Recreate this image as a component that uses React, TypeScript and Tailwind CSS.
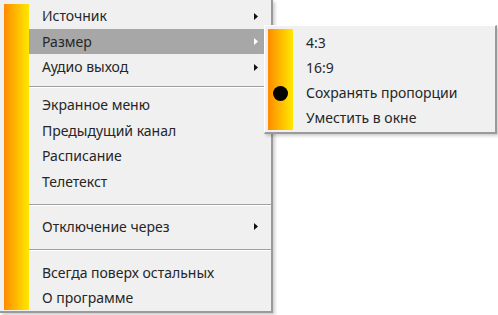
import React from 'react';

type Item =
  | { kind: 'item'; label: string; sub?: boolean; active?: boolean }
  | { kind: 'sep'; h: string };

const mainItems: Item[] = [
  { kind: 'item', label: 'Источник', sub: true },
  { kind: 'item', label: 'Размер', sub: true, active: true },
  { kind: 'item', label: 'Аудио выход', sub: true },
  { kind: 'sep', h: 'h-[12.5px] pt-[6px]' },
  { kind: 'item', label: 'Экранное меню' },
  { kind: 'item', label: 'Предыдущий канал' },
  { kind: 'item', label: 'Расписание' },
  { kind: 'item', label: 'Телетекст' },
  { kind: 'sep', h: 'h-[19.75px] pt-[10px]' },
  { kind: 'item', label: 'Отключение через', sub: true },
  { kind: 'sep', h: 'h-[20.25px] pt-[9.5px]' },
  { kind: 'item', label: 'Всегда поверх остальных' },
  { kind: 'item', label: 'О программе' },
];

const subItems = [
  { label: '4:3' },
  { label: '16:9' },
  { label: 'Сохранять пропорции', checked: true },
  { label: 'Уместить в окне' },
];

const Arrow: React.FC<{ light?: boolean }> = ({ light }) => (
  <svg width="4" height="7" viewBox="0 0 4 7" className="mr-[13px]">
    <path d="M0 0 L4 3.5 L0 7 Z" fill={light ? '#ffffff' : '#111111'} />
  </svg>
);

const App: React.FC = () => {
  return (
    <div
      className="relative w-[498px] h-[315px] bg-white overflow-hidden text-[14px] text-[#262626]"
      style={{ fontFamily: '"Noto Sans", "Open Sans", sans-serif' }}
    >
      {/* main popup menu */}
      <div className="w-[273px] h-[313px] bg-[#f0f0f0] border-r-2 border-b-2 border-[#9a9a9a] shadow-[2px_2px_3px_rgba(0,0,0,0.2)] pl-[4px] pt-[3.25px] flex">
        <div className="w-[25px] h-[306px] mt-[0.75px] bg-gradient-to-r from-[#ff8a00] to-[#ffe800]" />
        <div className="flex-1 flex flex-col">
          {mainItems.map((it, i) =>
            it.kind === 'sep' ? (
              <div key={i} className={it.h}>
                <div className="h-px bg-[#a0a0a0] border-b border-white box-content" />
              </div>
            ) : (
              <div
                key={i}
                className={`h-[25.5px] flex items-center justify-between pl-[13px] ${it.active ? 'bg-[#a7a7a7]' : ''}`}
              >
                <span className="leading-none">{it.label}</span>
                {it.sub && <Arrow light={it.active} />}
              </div>
            )
          )}
        </div>
      </div>

      {/* submenu */}
      <div className="absolute left-[264px] top-[25px] w-[233px] h-[109px] bg-[#f0f0f0] border border-t-white border-l-white border-r-[#9a9a9a] border-b-[#9a9a9a] border-r-2 border-b-2 shadow-[2px_2px_3px_rgba(0,0,0,0.2)] pl-[3px] pt-[3px] flex">
        <div className="w-[25px] h-[101px] bg-gradient-to-r from-[#ff8a00] to-[#ffe800]" />
        <div className="relative flex-1 flex flex-col pt-[1.5px] -ml-[25px]">
          {subItems.map((s) => (
            <div key={s.label} className="h-[25px] flex items-center">
              <div className="w-[25px] flex justify-center">
                {s.checked && <div className="w-[15px] h-[15px] rounded-full bg-black" />}
              </div>
              <span className="pl-[13px] leading-none">{s.label}</span>
            </div>
          ))}
        </div>
      </div>
    </div>
  );
};

export default App;
